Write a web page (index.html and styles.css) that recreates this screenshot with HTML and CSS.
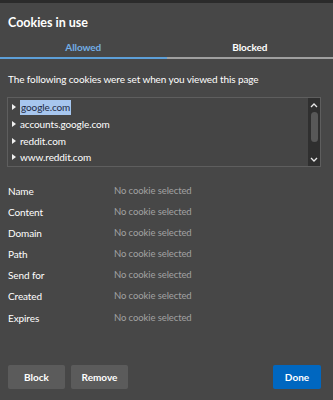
FILE: index.html
```html
<!DOCTYPE html>
<html>
<head>
<meta charset="utf-8">
<link rel="stylesheet" href="styles.css">
</head>
<body>
<div class="topbar"></div>
<div class="dialog">
  <h1 class="title">Cookies in use</h1>
  <div class="tabs">
    <div class="tab active">Allowed</div>
    <div class="tab">Blocked</div>
  </div>
  <p class="desc">The following cookies were set when you viewed this page</p>
  <div class="listbox">
    <ul class="tree">
      <li><span class="arrow"></span><span class="sel">google.com</span></li>
      <li><span class="arrow"></span>accounts.google.com</li>
      <li><span class="arrow"></span>reddit.com</li>
      <li><span class="arrow"></span>www.reddit.com</li>
    </ul>
    <div class="scrollbar">
      <svg class="chev" width="8" height="5" viewBox="0 0 8 5"><path d="M1 4 L4 1 L7 4" fill="none" stroke="#e8e8e8" stroke-width="1.3"/></svg>
      <div class="thumb"></div>
      <svg class="chev" width="8" height="5" viewBox="0 0 8 5"><path d="M1 1 L4 4 L7 1" fill="none" stroke="#e8e8e8" stroke-width="1.3"/></svg>
    </div>
  </div>
  <dl class="details">
    <div class="row"><dt>Name</dt><dd>No cookie selected</dd></div>
    <div class="row"><dt>Content</dt><dd>No cookie selected</dd></div>
    <div class="row"><dt>Domain</dt><dd>No cookie selected</dd></div>
    <div class="row"><dt>Path</dt><dd>No cookie selected</dd></div>
    <div class="row"><dt>Send for</dt><dd>No cookie selected</dd></div>
    <div class="row"><dt>Created</dt><dd>No cookie selected</dd></div>
    <div class="row"><dt>Expires</dt><dd>No cookie selected</dd></div>
  </dl>
  <div class="actions">
    <button class="btn">Block</button>
    <button class="btn">Remove</button>
    <button class="btn primary">Done</button>
  </div>
</div>
</body>
</html>
```
FILE: styles.css
```css
html, body {
  margin: 0;
  padding: 0;
  background: #474747;
  width: 333px;
  height: 400px;
  overflow: hidden;
}
body {
  font-family: Lato, "Noto Sans", sans-serif;
  font-size: 10px;
  letter-spacing: -0.1px;
  color: #ffffff;
}
.topbar {
  height: 3px;
  background: #2b2b2b;
}
.dialog {
  display: flex;
  flex-direction: column;
}
.title {
  margin: 0;
  padding: 12px 8px 0 8px;
  font-size: 12.5px;
  font-weight: 700;
  letter-spacing: 0;
  line-height: 16px;
  height: 18px;
}
.tabs {
  display: flex;
}
.tab {
  flex: 1;
  text-align: center;
  font-weight: 700;
  font-size: 10px;
  line-height: 16px;
  padding: 6px 0 2px 0;
  border-bottom: 2px solid #a0a0a0;
  color: #ffffff;
}
.tab.active {
  color: #72aee6;
  border-bottom-color: #5d9fd8;
}
.desc {
  margin: 12px 8px 0 8px;
  font-size: 10px;
  line-height: 16px;
  color: #ffffff;
}
.listbox {
  margin: 10px 12px 0 7px;
  height: 68px;
  border: 1px solid #5e5e5e;
  display: flex;
  background: #454545;
}
.tree {
  list-style: none;
  margin: 0;
  padding: 1px 0 0 4px;
  flex: 1;
}
.tree li {
  height: 16.7px;
  display: flex;
  align-items: center;
}
.arrow {
  width: 0;
  height: 0;
  border-top: 3.5px solid transparent;
  border-bottom: 3.5px solid transparent;
  border-left: 4px solid #f0f0f0;
  margin-right: 4px;
}
.sel {
  background: #a7c6ee;
  color: #1e2a44;
  padding: 0 1px;
  line-height: 15px;
}
.scrollbar {
  width: 12px;
  background: #2f2f2f;
  display: flex;
  flex-direction: column;
  align-items: center;
  padding: 5px 0 4px 0;
  justify-content: space-between;
}
.thumb {
  width: 7px;
  height: 30px;
  border-radius: 4px;
  background: #585858;
  margin-top: -12px;
}
.details {
  margin: 17px 0 0 0;
  padding: 0 8px;
}
.row {
  display: flex;
  height: 21.1px;
  line-height: 14px;
}
.row dt {
  width: 106px;
}
.row dd {
  margin: 0;
  font-size: 9.5px;
  color: #a2a2a2;
}
.actions {
  display: flex;
  gap: 6px;
  padding: 33px 12px 0 8px;
}
.btn {
  font-family: Lato, "Noto Sans", sans-serif;
  font-size: 10px;
  font-weight: 700;
  color: #ffffff;
  background: #5b5b5b;
  border: none;
  border-radius: 2px;
  height: 24px;
  width: 57px;
  padding: 0;
}
.btn.primary {
  margin-left: auto;
  width: 48px;
  background: #0067c0;
}
```
